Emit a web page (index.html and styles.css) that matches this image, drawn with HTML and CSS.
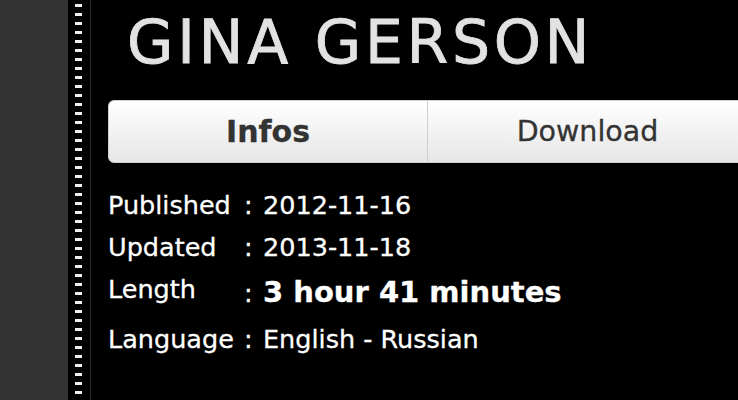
FILE: index.html
```html
<!DOCTYPE html>
<html lang="en">
<head>
<meta charset="utf-8">
<title>Gina Gerson</title>
<link rel="stylesheet" href="styles.css">
</head>
<body>
<div class="page">
  <aside class="sidebar"></aside>
  <div class="strip"></div>
  <main class="main">
    <h1 class="title">GINA GERSON</h1>
    <nav class="tabs">
      <div class="tab tab-active">Infos</div>
      <div class="tab">Download</div>
    </nav>
    <table class="info">
      <tr>
        <td class="label">Published</td>
        <td class="sep">:</td>
        <td class="val">2012-11-16</td>
      </tr>
      <tr>
        <td class="label">Updated</td>
        <td class="sep">:</td>
        <td class="val">2013-11-18</td>
      </tr>
      <tr class="row-length">
        <td class="label">Length</td>
        <td class="sep">:</td>
        <td class="val"><span class="strong">3 hour 41 minutes</span></td>
      </tr>
      <tr>
        <td class="label">Language</td>
        <td class="sep">:</td>
        <td class="val">English - Russian</td>
      </tr>
    </table>
  </main>
</div>
</body>
</html>
```

FILE: styles.css
```css
html, body {
  margin: 0;
  padding: 0;
  background: #000;
  height: 100%;
  overflow: hidden;
}

body {
  font-family: "DejaVu Sans", Verdana, sans-serif;
}

.page {
  display: flex;
  height: 400px;
}

.sidebar {
  width: 68px;
  flex: none;
  background: #333333;
}

.strip {
  width: 22px;
  flex: none;
  background-color: #000;
  background-image: linear-gradient(#f0f0f0 0 3px, transparent 3px 9px);
  background-size: 7px 9px;
  background-position: 7px 4px;
  background-repeat: repeat-y;
  border-right: 1px solid #2c2c2c;
}

.main {
  flex: 1;
  min-width: 0;
  overflow: hidden;
  padding: 7px 0 0 17px;
}

.title {
  margin: 0 0 0 19px;
  font-size: 60px;
  line-height: 70px;
  font-weight: normal;
  letter-spacing: 3.7px;
  color: #e2e2e2;
  -webkit-text-stroke: 0.8px #e2e2e2;
  white-space: nowrap;
}

.tabs {
  margin-top: 23px;
  width: 638px;
  height: 61px;
  display: grid;
  grid-template-columns: 1fr 1fr;
  border: 1px solid #cfcfcf;
  border-radius: 6px;
  background: linear-gradient(#ffffff, #e6e6e6);
  overflow: hidden;
}

.tab {
  display: flex;
  align-items: center;
  justify-content: center;
  font-size: 28.5px;
  color: #333;
  -webkit-text-stroke: 0.3px #333;
}

.tab-active {
  font-weight: bold;
  font-size: 30px;
  border-right: 1px solid #cfcfcf;
}

.info {
  margin-top: 21px;
  border-collapse: collapse;
  font-size: 25.5px;
  line-height: 42px;
  color: #fff;
  -webkit-text-stroke: 0.3px #fff;
}

.info td {
  padding: 0;
  white-space: nowrap;
}

.info .label {
  width: 136px;
  vertical-align: top;
}

.info .sep {
  width: 19px;
  vertical-align: baseline;
}

.info .val {
  vertical-align: baseline;
}

.row-length td {
  padding-bottom: 2px;
}

.strong {
  font-weight: bold;
  font-size: 29px;
  line-height: 48px;
}
```
